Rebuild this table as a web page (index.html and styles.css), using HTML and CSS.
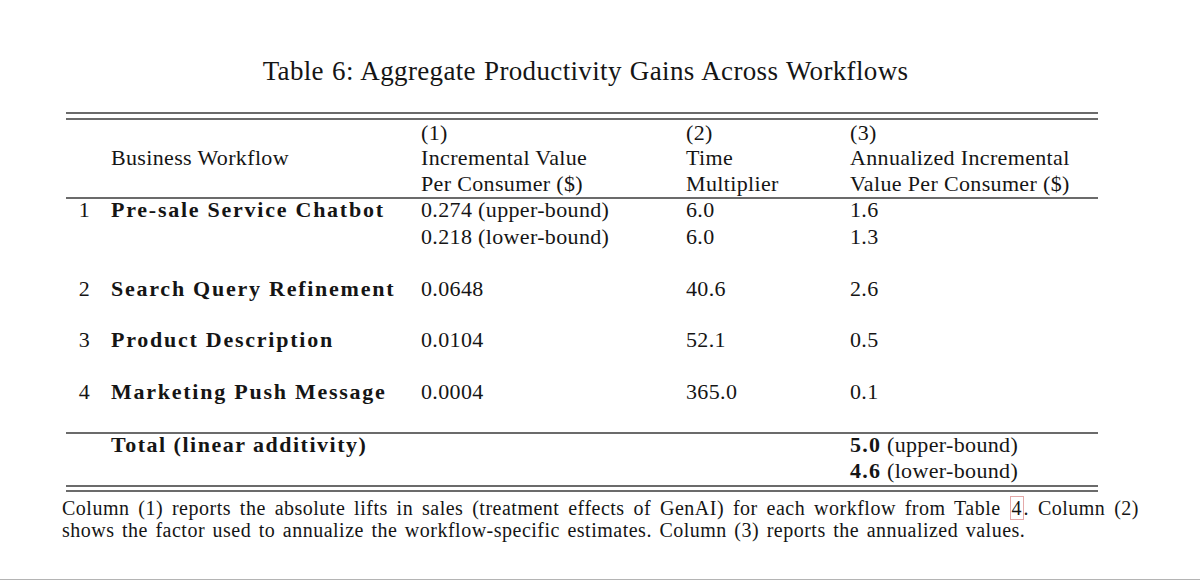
FILE: index.html
```html
<!DOCTYPE html>
<html lang="en">
<head>
<meta charset="utf-8">
<title>Table 6: Aggregate Productivity Gains Across Workflows</title>
<link rel="stylesheet" href="styles.css">
</head>
<body>
<div class="page">
  <h1 class="title">Table 6: Aggregate Productivity Gains Across Workflows</h1>

  <div class="tbl">
    <div class="rule"></div>
    <div class="rule rule--second"></div>

    <div class="row row--head">
      <div class="num"></div>
      <div class="cell"><br>Business Workflow</div>
      <div class="cell">(1)<br>Incremental Value<br>Per Consumer ($)</div>
      <div class="cell">(2)<br>Time<br>Multiplier</div>
      <div class="cell">(3)<br>Annualized Incremental<br>Value Per Consumer ($)</div>
    </div>

    <div class="rule"></div>

    <div class="row row--lead">
      <div class="num">1</div>
      <div class="cell name">Pre-sale Service Chatbot</div>
      <div class="cell">0.274 (upper-bound)<br>0.218 (lower-bound)</div>
      <div class="cell">6.0<br>6.0</div>
      <div class="cell">1.6<br>1.3</div>
    </div>

    <div class="row row--spaced">
      <div class="num">2</div>
      <div class="cell name">Search Query Refinement</div>
      <div class="cell">0.0648</div>
      <div class="cell">40.6</div>
      <div class="cell">2.6</div>
    </div>

    <div class="row row--spaced">
      <div class="num">3</div>
      <div class="cell name">Product Description</div>
      <div class="cell">0.0104</div>
      <div class="cell">52.1</div>
      <div class="cell">0.5</div>
    </div>

    <div class="row row--spaced">
      <div class="num">4</div>
      <div class="cell name">Marketing Push Message</div>
      <div class="cell">0.0004</div>
      <div class="cell">365.0</div>
      <div class="cell">0.1</div>
    </div>

    <div class="rule rule--total"></div>

    <div class="row row--total">
      <div class="num"></div>
      <div class="cell name name--total">Total (linear additivity)</div>
      <div class="cell cell--total-value"><b class="bold">5.0</b> (upper-bound)<br><b class="bold">4.6</b> (lower-bound)</div>
    </div>

    <div class="rule rule--bottom"></div>
    <div class="rule rule--second-bottom"></div>
  </div>

  <p class="caption">
    <span class="caption-line caption-line--full">Column (1) reports the absolute lifts in sales (treatment effects of GenAI) for each workflow from Table <a class="ref" href="#table4">4</a>. Column (2)</span>
    <span class="caption-line">shows the factor used to annualize the workflow-specific estimates. Column (3) reports the annualized values.</span>
  </p>
</div>
</body>
</html>
```

FILE: styles.css
```css
* {
  box-sizing: border-box;
}

html,
body {
  margin: 0;
  padding: 0;
  background: #ffffff;
}

body {
  font-family: "Liberation Serif", "Times New Roman", serif;
  color: #151515;
}

.page {
  height: 580px;
  padding-top: 56px;
  border-bottom: 1px solid #b4b4b4;
  overflow: hidden;
}

.title {
  margin: 0 0 0 66px;
  width: 1032px;
  padding-left: 7px;
  font-size: 27px;
  font-weight: normal;
  line-height: 30px;
  letter-spacing: 0.35px;
  word-spacing: 1px;
  text-align: center;
}

.tbl {
  margin: 25.7px 0 0 66px;
  width: 1032px;
  font-size: 22px;
  letter-spacing: 0.35px;
}

.rule {
  height: 2px;
  background: #6b6b6b;
}

.rule--second {
  margin-top: 4px;
}

.rule--total {
  margin-top: 27.2px;
}

.rule--bottom {
  margin-top: 1.3px;
}

.rule--second-bottom {
  margin-top: 3.3px;
}

.row {
  display: grid;
  grid-template-columns: 45px 310px 265px 164px 248px;
  line-height: 25.7px;
}

.num {
  text-align: right;
  padding-right: 21px;
}

.cell {
  white-space: nowrap;
}

.name {
  font-weight: bold;
  letter-spacing: 1.75px;
}

.name--total {
  grid-column: 2 / 4;
  letter-spacing: 1.5px;
}

.cell--total-value {
  grid-column: 5;
}

.bold {
  font-weight: bold;
  letter-spacing: 1.2px;
}

.row--lead {
  margin-top: -2.5px;
  line-height: 27px;
}

.row--spaced {
  margin-top: 25.7px;
}

.row--total {
  margin-top: -1.7px;
}

.caption {
  margin: 5px 0 0 62px;
  width: 1077px;
  font-size: 20px;
  line-height: 22px;
  letter-spacing: 0.5px;
  word-spacing: 2px;
}

.caption-line {
  display: block;
}

.caption-line--full {
  text-align: justify;
  text-align-last: justify;
}

.ref {
  color: inherit;
  text-decoration: none;
  border: 1px solid #e4a9a9;
  padding: 0 1px;
  letter-spacing: 0;
}
```
